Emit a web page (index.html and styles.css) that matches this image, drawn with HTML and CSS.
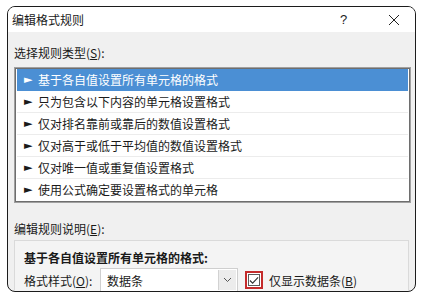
FILE: index.html
```html
<!DOCTYPE html>
<html lang="zh">
<head>
<meta charset="utf-8">
<title>编辑格式规则</title>
<link rel="stylesheet" href="styles.css">
</head>
<body>
<div class="window">
  <div class="titlebar">
    <span class="title">编辑格式规则</span>
    <span class="help">?</span>
    <span class="close">
      <svg width="12" height="12" viewBox="0 0 12 12"><path d="M1 1 L11 11 M11 1 L1 11" stroke="#222" stroke-width="1" fill="none"/></svg>
    </span>
  </div>
  <div class="content">
    <div class="label top-label">选择规则类型(<u>S</u>):</div>
    <div class="listbox">
      <div class="row selected"><span class="arrow">►</span>基于各自值设置所有单元格的格式</div>
      <div class="row"><span class="arrow">►</span>只为包含以下内容的单元格设置格式</div>
      <div class="row"><span class="arrow">►</span>仅对排名靠前或靠后的数值设置格式</div>
      <div class="row"><span class="arrow">►</span>仅对高于或低于平均值的数值设置格式</div>
      <div class="row"><span class="arrow">►</span>仅对唯一值或重复值设置格式</div>
      <div class="row last"><span class="arrow">►</span>使用公式确定要设置格式的单元格</div>
    </div>
    <div class="label mid-label">编辑规则说明(<u>E</u>):</div>
    <div class="panel">
      <div class="panel-title">基于各自值设置所有单元格的格式:</div>
      <div class="form-row">
        <span class="field-label">格式样式(<u>O</u>):</span>
        <div class="combo">
          <span class="combo-text">数据条</span>
          <span class="combo-btn">
            <svg width="9" height="6" viewBox="0 0 9 6"><path d="M1 1 L4.5 4.5 L8 1" stroke="#555" stroke-width="1" fill="none"/></svg>
          </span>
        </div>
        <span class="check-hl">
          <span class="checkbox">
            <svg width="11" height="9" viewBox="0 0 11 9"><path d="M1 4.5 L4 7.5 L10 1" stroke="#333" stroke-width="1.2" fill="none"/></svg>
          </span>
        </span>
        <span class="check-label">仅显示数据条(<u>B</u>)</span>
      </div>
    </div>
  </div>
</div>
</body>
</html>
```
FILE: styles.css
```css
html, body {
  margin: 0;
  padding: 0;
  background: #ffffff;
}
body {
  font-family: "Noto Sans CJK SC", "Noto Sans", sans-serif;
  font-size: 12px;
  color: #1a1a1a;
}
.window {
  margin: 6px 0 0 7px;
  width: 407px;
  height: 284px;
  border: 1px solid #1c1c1c;
  border-radius: 8px;
  overflow: hidden;
  background: #f0f0f0;
  display: flex;
  flex-direction: column;
}
.titlebar {
  height: 25px;
  background: #ffffff;
  display: flex;
  align-items: center;
  flex-shrink: 0;
}
.title {
  padding-left: 4px;
  font-size: 12px;
  flex: 1;
}
.help {
  width: 14px;
  margin-right: 34px;
  font-family: "Liberation Sans", sans-serif;
  font-size: 13px;
  color: #222;
}
.close {
  width: 12px;
  height: 12px;
  margin-right: 15px;
  display: flex;
}
.content {
  padding: 0 4px 0 6px;
  display: flex;
  flex-direction: column;
}
.label {
  height: 20px;
  line-height: 20px;
}
.top-label {
  margin-top: 11px;
  margin-bottom: 4px;
}
.listbox {
  background: #ffffff;
  border: 1px solid #a0a0a0;
  box-shadow: inset 0 0 0 1px #6e6e6e;
  padding: 1px 2px 2px 2px;
  display: flex;
  flex-direction: column;
}
.row {
  height: 21px;
  line-height: 21px;
  border-bottom: 1px solid #ececec;
  display: flex;
  align-items: center;
  white-space: nowrap;
}
.row.last {
  border-bottom: none;
}
.row.selected {
  background: #4b8fd4;
  color: #ffffff;
  border-bottom-color: #4b8fd4;
}
.arrow {
  width: 14px;
  padding-left: 7px;
  font-size: 11px;
  font-family: "DejaVu Sans", sans-serif;
}
.mid-label {
  margin-top: 16px;
  margin-bottom: 1px;
}
.panel {
  margin-right: 2px;
  border: 1px solid #dadada;
  background: #f4f4f4;
  padding: 7px 0 0 9px;
  height: 60px;
}
.panel-title {
  font-weight: bold;
  height: 20px;
  line-height: 20px;
}
.form-row {
  display: flex;
  align-items: center;
  margin-top: 0;
}
.field-label {
  width: 76px;
}
.combo {
  width: 136px;
  height: 22px;
  background: #ffffff;
  border: 1px solid #cfcfcf;
  display: flex;
  align-items: center;
}
.combo-text {
  flex: 1;
  padding-left: 6px;
}
.combo-btn {
  width: 17px;
  height: 20px;
  background: #ececec;
  border-left: 1px solid #d2d2d2;
  margin-right: 1px;
  display: flex;
  align-items: center;
  justify-content: center;
}
.check-hl {
  margin-left: 7px;
  width: 14px;
  height: 14px;
  border: 2px solid #c42b2b;
  display: flex;
  align-items: center;
  justify-content: center;
  background: #ffffff;
}
.checkbox {
  width: 12px;
  height: 12px;
  border: 1px solid #5a5a5a;
  display: flex;
  align-items: center;
  justify-content: center;
  box-sizing: border-box;
}
.check-label {
  margin-left: 6px;
}
```
